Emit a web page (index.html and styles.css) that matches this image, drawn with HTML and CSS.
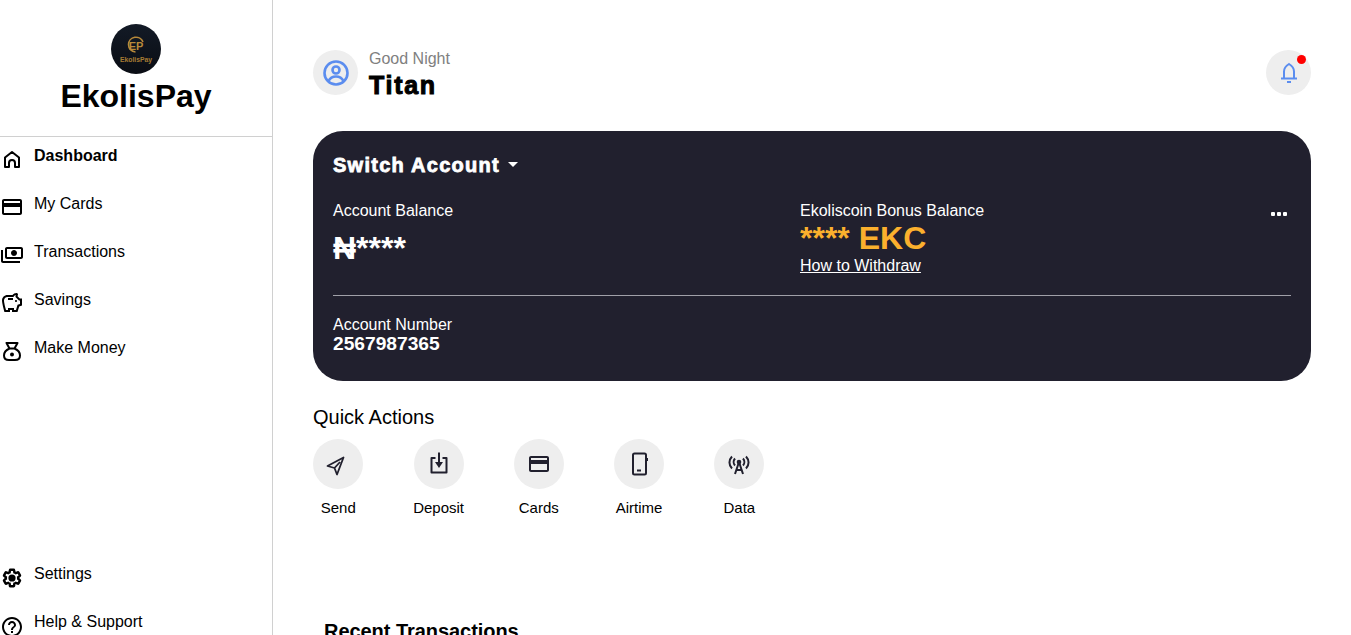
FILE: index.html
```html
<!DOCTYPE html>
<html lang="en">
<head>
<meta charset="utf-8">
<title>EkolisPay</title>
<link rel="stylesheet" href="styles.css">
</head>
<body>
<div class="app">
  <aside class="sidebar">
    <div class="brand">
      <svg class="logo" viewBox="0 0 50 50">
        <defs><linearGradient id="lg" x1="0" y1="0" x2="0" y2="1"><stop offset="0" stop-color="#131a26"/><stop offset="1" stop-color="#0a0d14"/></linearGradient></defs>
        <circle cx="25" cy="25" r="25" fill="url(#lg)"/>
        <path d="M17.500 20.500a7.500 7.500 0 0 1 14.500-2.500M17.500 20.500a7.500 7.500 0 0 0 7 7.500" fill="none" stroke="#b8893a" stroke-width="1.600"/>
        <text x="25" y="26" class="logo-ep">EP</text>
        <text x="25" y="37.500" class="logo-name">EkolisPay</text>
      </svg>
      <h1 class="brand-name">EkolisPay</h1>
    </div>
    <nav class="nav">
      <a class="nav-item active"><svg class="nav-icon" viewBox="0 0 24 24"><path d="M5 20v-9.500L12 5l7 5.500V20h-4v-4a3 3 0 0 0-6 0v4z" fill="none" stroke="#000" stroke-width="2" stroke-linejoin="round"/></svg><span>Dashboard</span></a>
      <a class="nav-item"><svg class="nav-icon" viewBox="0 0 24 24"><path d="M20 4H4c-1.110 0-1.990.890-1.990 2L2 18c0 1.110.890 2 2 2h16c1.110 0 2-.890 2-2V6c0-1.110-.890-2-2-2zm0 14H4v-6h16v6zm0-10H4V6h16v2z"/></svg><span>My Cards</span></a>
      <a class="nav-item"><svg class="nav-icon" viewBox="0 0 24 24"><path transform="matrix(-1 0 0 1 24 0)" d="M19 14V6c0-1.100-.900-2-2-2H3c-1.100 0-2 .900-2 2v8c0 1.100.900 2 2 2h14c1.100 0 2-.900 2-2zm-2 0H3V6h14v8zm-7-7c-1.660 0-3 1.340-3 3s1.340 3 3 3 3-1.340 3-3-1.340-3-3-3zm13 0v11c0 1.100-.900 2-2 2H4v-2h17V7h2z"/></svg><span>Transactions</span></a>
      <a class="nav-item"><svg class="nav-icon" viewBox="0 0 24 24"><path d="M15 10c0-.550.450-1 1-1s1 .450 1 1-.450 1-1 1-1-.450-1-1zM8 9h5V7H8v2zm14-1.500v6.970l-2.820.940L17.500 21H12v-2h-2v2H4.500S2 12.540 2 9.500 4.460 4 7.500 4h5c.910-1.210 2.360-2 4-2 .830 0 1.500.670 1.500 1.500 0 .210-.040.400-.120.580-.140.320-.260.680-.320 1.070l2.260 2.350H22zm-2 2h-1l-3.500-3.500c0-.650.090-1.290.260-1.910C14.790 4.340 14 5.060 13.500 6h-6C5.570 6 4 7.570 4 9.500c0 1.880 1.220 6.650 2 9.500h2v-2h6v2h2l1.560-5.180L20 13.020V9.500z"/></svg><span>Savings</span></a>
      <a class="nav-item"><svg class="nav-icon" viewBox="0 0 24 24"><path d="M6.500 4h11l-3 5.500h-5zM9.500 9.500C6 11 4 13.500 4 16.500 4 19.500 6 21 9 21h6c3 0 5-1.500 5-4.500 0-3-2-5.500-5.500-7" fill="none" stroke="#000" stroke-width="2" stroke-linejoin="round"/><circle cx="12" cy="15.500" r="2"/></svg><span>Make Money</span></a>
    </nav>
    <nav class="nav nav-bottom">
      <a class="nav-item"><svg class="nav-icon" viewBox="0 0 24 24"><g transform="translate(12 11) scale(.86) translate(-12 -12)"><path d="M19.140 12.940c.040-.300.060-.610.060-.940 0-.320-.020-.640-.070-.940l2.030-1.580c.180-.140.230-.410.120-.610l-1.920-3.320c-.120-.220-.370-.290-.590-.220l-2.390.960c-.500-.380-1.030-.700-1.620-.940l-.360-2.540c-.040-.240-.240-.410-.480-.410h-3.840c-.240 0-.430.170-.470.410l-.360 2.540c-.590.240-1.130.570-1.620.940l-2.390-.960c-.220-.080-.470 0-.590.220L2.740 8.870c-.120.210-.080.470.120.610l2.030 1.580c-.050.300-.090.630-.090.940s.020.640.070.940l-2.030 1.580c-.180.140-.230.410-.120.610l1.920 3.320c.120.220.370.290.590.220l2.390-.960c.500.380 1.030.700 1.620.940l.360 2.540c.050.240.240.410.480.410h3.840c.240 0 .440-.170.470-.410l.360-2.540c.590-.240 1.130-.560 1.620-.940l2.390.960c.220.080.470 0 .590-.220l1.920-3.320c.120-.220.070-.470-.120-.610l-2.010-1.580z" fill="none" stroke="#000" stroke-width="2.800"/><circle cx="12" cy="12" r="4.200"/></g></svg><span>Settings</span></a>
      <a class="nav-item"><svg class="nav-icon" viewBox="0 0 24 24"><path d="M11 18h2v-2h-2v2zm1-16C6.480 2 2 6.480 2 12s4.480 10 10 10 10-4.480 10-10S17.520 2 12 2zm0 18c-4.410 0-8-3.590-8-8s3.590-8 8-8 8 3.590 8 8-3.590 8-8 8zm0-14c-2.210 0-4 1.790-4 4h2c0-1.100.900-2 2-2s2 .900 2 2c0 2-3 1.750-3 5h2c0-2.250 3-2.500 3-5 0-2.210-1.790-4-4-4z"/></svg><span>Help &amp; Support</span></a>
    </nav>
  </aside>
  <main class="main">
    <header class="topbar">
      <div class="user">
        <div class="circle-46">
          <svg class="icon-26" viewBox="0 0 26 26" fill="none" stroke="#5b8def" stroke-width="2.600"><circle cx="13" cy="13" r="11.500"/><circle cx="13" cy="10" r="3.500"/><path d="M5.500 21c1.500-3 4-4.500 7.500-4.500s6 1.500 7.500 4.500"/></svg>
        </div>
        <div class="user-text">
          <div class="greeting">Good Night</div>
          <div class="username">Titan</div>
        </div>
      </div>
      <div class="circle-46 bell">
        <svg class="icon-bell" viewBox="0 0 18 22" fill="none" stroke="#5b8def" stroke-width="2"><path d="M4 16.500V9.500C4 6 5.500 4 9 2c3.500 2 5 4 5 7.500v7M1 16.500h16"/><path d="M7 20h4"/></svg>
        <span class="dot"></span>
      </div>
    </header>

    <section class="card">
      <div class="switch">Switch Account <span class="caret"></span></div>
      <div class="balances">
        <div>
          <div class="label">Account Balance</div>
          <div class="amount">₦****</div>
        </div>
        <div>
          <div class="label">Ekoliscoin Bonus Balance</div>
          <div class="amount gold">**** EKC</div>
          <a class="withdraw">How to Withdraw</a>
        </div>
        <svg class="more" viewBox="0 0 16 4"><rect width="4" height="4" rx="1"/><rect x="6" width="4" height="4" rx="1"/><rect x="12" width="4" height="4" rx="1"/></svg>
      </div>
      <div class="divider"></div>
      <div class="label">Account Number</div>
      <div class="acct-num">2567987365</div>
    </section>

    <h2 class="qa-title">Quick Actions</h2>
    <div class="qa-row">
      <div class="qa"><div class="qa-circle"><svg class="qa-icon send" viewBox="0 0 24 24"><path d="M1.500 14 17.500 5.500 11 22.500 8.500 16zM8.500 16 14 10"/></svg></div><span>Send</span></div>
      <div class="qa"><div class="qa-circle"><svg class="qa-icon" viewBox="0 0 24 24"><path d="M8.500 6H4.500v14.500h15V6H15.500M12 0.500v12"/><path class="fill" d="M8 10h8l-4 6z"/></svg></div><span>Deposit</span></div>
      <div class="qa"><div class="qa-circle"><svg class="qa-icon nostroke" viewBox="0 0 24 24"><path d="M20 4H4c-1.110 0-1.990.890-1.990 2L2 18c0 1.110.890 2 2 2h16c1.110 0 2-.890 2-2V6c0-1.110-.890-2-2-2zm0 14H4v-6h16v6zm0-10H4V6h16v2z"/></svg></div><span>Cards</span></div>
      <div class="qa"><div class="qa-circle"><svg class="qa-icon" viewBox="0 0 24 24"><rect x="6" y="1.500" width="13" height="21" rx="1.500"/><path d="M10 18.500h4M20 6v3"/></svg></div><span>Airtime</span></div>
      <div class="qa"><div class="qa-circle"><svg class="qa-icon" viewBox="0 0 24 24"><path d="M8 22 12 10l4 12M9.500 18h5"/><circle cx="12" cy="10" r="2.300" class="fill"/><path d="M8 6.500c-1.800 2-1.800 5 0 7M16 6.500c1.800 2 1.800 5 0 7M5 4.500c-3.400 3.500-3.400 8.500 0 12M19 4.500c3.400 3.500 3.400 8.500 0 12"/></svg></div><span>Data</span></div>
    </div>

    <h2 class="recent">Recent Transactions</h2>
  </main>
</div>
</body>
</html>
```

FILE: styles.css
```css
* { box-sizing: border-box; }
html, body { margin: 0; height: 100%; overflow: hidden; background: #fff; }
body { font-family: "Liberation Sans", Arial, sans-serif; color: #000; }
.app { display: flex; height: 635px; overflow: hidden; }

.sidebar { width: 273px; flex: none; border-right: 1px solid #d0d0d0; display: flex; flex-direction: column; }
.brand { height: 137px; border-bottom: 1px solid #d0d0d0; padding-top: 24px; display: flex; flex-direction: column; align-items: center; }
.logo { width: 50px; height: 50px; display: block; }
.logo-ep { font: 700 11px "Liberation Sans", sans-serif; fill: #b8893a; text-anchor: middle; }
.logo-name { font: 700 6.800px "Liberation Sans", sans-serif; fill: #a67c34; text-anchor: middle; }
.brand-name { margin: 4px 0 0; font-size: 32px; line-height: 37px; font-weight: 700; }

.nav { display: flex; flex-direction: column; gap: 30px; padding-top: 10px; }
.nav-bottom { margin-top: auto; padding-top: 0; margin-bottom: 4px; }
.nav-item { display: flex; align-items: flex-start; gap: 10px; font-size: 16px; line-height: 18px; height: 18px; }
.nav-item.active { font-weight: 700; }
.nav-icon { width: 24px; height: 24px; flex: none; }
.nav-bottom .nav-icon { margin-top: 2px; }

.main { flex: 1; min-width: 0; padding: 50px 40px 0; }
.topbar { display: flex; justify-content: space-between; align-items: flex-start; height: 46px; }
.user { display: flex; gap: 11px; }
.circle-46 { width: 45px; height: 45px; border-radius: 50%; background: #eee; display: flex; align-items: center; justify-content: center; }
.bell { position: relative; }
.icon-26 { width: 26px; height: 26px; }
.icon-bell { width: 18px; height: 22px; }
.dot { position: absolute; top: 5px; right: 5px; width: 9px; height: 9px; border-radius: 50%; background: #f00; }
.greeting { font-size: 16px; line-height: 18px; color: #808080; }
.username { font-size: 25px; line-height: 30px; font-weight: 700; margin-top: 2px; letter-spacing: 1.700px; -webkit-text-stroke: 1px #000; }

.card { margin-top: 35px; height: 250px; border-radius: 30px; background: #21202e; color: #fff; padding: 22px 20px 0; }
.switch { font-size: 20px; line-height: 24px; font-weight: 700; letter-spacing: 1.260px; -webkit-text-stroke: 0.800px #fff; display: flex; align-items: center; gap: 8px; }
.caret { width: 0; height: 0; border-left: 5px solid transparent; border-right: 5px solid transparent; border-top: 5px solid #fff; margin-top: -2px; }
.balances { display: grid; grid-template-columns: 467px 1fr auto; margin-top: 25px; height: 93px; }
.label { font-size: 16px; line-height: 18px; }
.amount { font-size: 32px; line-height: 37px; font-weight: 700; margin-top: 10px; }
.gold { color: #fbb02d; margin-top: 0; height: 36px; }
.withdraw { display: block; font-size: 16px; line-height: 18px; text-decoration: underline; color: #fff; margin-top: 1px; }
.more { width: 16px; height: 4px; fill: #fff; margin-top: 10px; margin-right: 4px; }
.divider { height: 1px; background: #a0a0a8; margin-bottom: 20px; }
.acct-num { font-size: 19.200px; line-height: 22px; font-weight: 700; margin-top: -1px; }

.qa-title { margin: 25px 0 0; font-size: 20px; line-height: 23px; font-weight: 400; }
.qa-row { display: flex; gap: 50.250px; margin-top: 10px; padding-left: 0.300px; }
.qa { width: 50px; display: flex; flex-direction: column; align-items: center; gap: 10px; font-size: 15px; line-height: 18px; white-space: nowrap; }
.qa-circle { width: 50px; height: 50px; border-radius: 50%; background: #eee; display: flex; align-items: center; justify-content: center; }
.qa-icon { width: 24px; height: 24px; fill: none; stroke: #21202e; stroke-width: 2; stroke-linejoin: round; }
.qa-icon.send { stroke-width: 1.800; }
.qa-icon .fill { fill: #21202e; stroke: none; }
.qa-icon.nostroke { fill: #21202e; stroke: none; }

.recent { margin: 103px 0 0 11px; font-size: 20px; line-height: 23px; font-weight: 700; letter-spacing: -0.050px; }
```
